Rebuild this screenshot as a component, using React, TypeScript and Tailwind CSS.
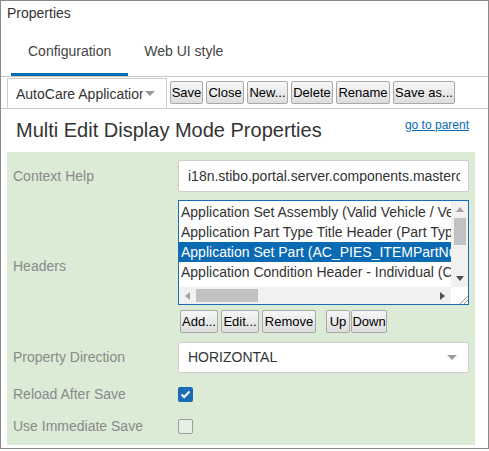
import React from "react";

const Btn = ({ children, w }: { children: React.ReactNode; w: string }) => (
  <div
    className={`${w} h-[23px] flex items-center justify-center border border-[#a9a9a9] rounded-[2px] bg-gradient-to-b from-[#f7f7f7] to-[#dddddd] text-[13px] text-black leading-none whitespace-nowrap`}
  >
    {children}
  </div>
);

const Caret = ({ cls }: { cls: string }) => (
  <svg width="10" height="6" viewBox="0 0 10 6" className={cls}>
    <polygon points="0,0 10,0 5,5" fill="#9a9a9a" />
  </svg>
);

export default function App() {
  const rows = [
    "Application Set Assembly (Valid Vehicle / Vehicle)",
    "Application Part Type Title Header (Part Type)",
    "Application Set Part (AC_PIES_ITEMPartNumber)",
    "Application Condition Header - Individual (Condition)",
  ];
  return (
    <div
      className="w-[489px] h-[451px] bg-white"
      style={{ fontFamily: '"Liberation Sans", Arial, sans-serif' }}
    >
      <div className="w-[489px] h-[449px] border border-[#8a8a8a] flex flex-col">
        {/* title */}
        <div className="h-[25px] pl-[6px] pt-[4px] text-[14px] leading-[16px] text-[#333]">
          Properties
        </div>
        {/* tabs */}
        <div className="h-[51px] flex items-stretch border-b border-[#c9c9c9] pl-[10px]">
          <div className="px-[17px] pt-[4px] flex items-center border-b-[3px] border-[#0b6cb4] text-[14px] text-[#444]">
            Configuration
          </div>
          <div className="px-[16px] pt-[4px] flex items-center border-b-[3px] border-transparent text-[14px] text-[#444]">
            Web UI style
          </div>
        </div>
        {/* toolbar */}
        <div className="h-[32px] flex items-start border-b border-[#c9c9c9] pl-[6px] pt-[1px]">
          <div className="w-[160px] h-[31px] border border-[#cfcfcf] border-b-0 flex items-center pl-[8px] mr-[3px]">
            <div className="w-[127px] overflow-hidden whitespace-nowrap text-[14px] text-[#333]">
              AutoCare Applications
            </div>
            <Caret cls="ml-[2px]" />
          </div>
          <div className="flex gap-[3px] pt-[3px]">
            <Btn w="w-[33px]">Save</Btn>
            <Btn w="w-[38px]">Close</Btn>
            <Btn w="w-[41px]">New...</Btn>
            <Btn w="w-[42px]">Delete</Btn>
            <Btn w="w-[54px]">Rename</Btn>
            <Btn w="w-[62px]">Save as...</Btn>
          </div>
        </div>
        {/* heading */}
        <div className="h-[43px] flex items-start pl-[15px] pr-[19px]">
          <div className="pt-[9px] text-[20px] leading-[24px] text-[#333] flex-1">
            Multi Edit Display Mode Properties
          </div>
          <div className="pt-[8px] text-[12px] leading-[16px] text-[#0b6cb4] underline">
            go to parent
          </div>
        </div>
        {/* green panel */}
        <div className="ml-[6px] w-[468px] h-[293px] bg-[#dbebd6] flex flex-col pt-[8px]">
          {/* context help */}
          <div className="flex items-center h-[32px]">
            <div className="w-[171px] pl-[6px] text-[14px] text-[#8a8a8a]">Context Help</div>
            <div className="w-[291px] h-[32px] bg-white border border-[#cfcfcf] rounded-[2px] flex items-center pl-[9px] pr-[8px]">
              <div className="overflow-hidden whitespace-nowrap text-[14px] text-[#333]">
                i18n.stibo.portal.server.components.mastercontrol.help
              </div>
            </div>
          </div>
          {/* headers */}
          <div className="flex items-center mt-[8px]">
            <div className="w-[171px] pl-[6px] text-[14px] text-[#8a8a8a]">Headers</div>
            <div className="w-[291px] flex flex-col">
              <div className="w-[291px] h-[105px] bg-white border border-[#1a6db5] flex flex-col">
                <div className="flex h-[86px]">
                  <div className="w-[272px] pt-[1px] overflow-hidden">
                    {rows.map((r, i) => (
                      <div
                        key={i}
                        className={`h-[20px] pl-[2px] flex items-center whitespace-nowrap text-[14px] ${
                          i === 2 ? "bg-[#0a6ab3] text-white" : "text-[#333]"
                        }`}
                      >
                        {r}
                      </div>
                    ))}
                  </div>
                  {/* vertical scrollbar */}
                  <div className="w-[17px] h-[86px] bg-[#f1f1f1] flex flex-col items-center">
                    <div className="h-[17px] flex items-center justify-center">
                      <svg width="8" height="5" viewBox="0 0 8 5">
                        <polygon points="0,5 8,5 4,0" fill="#a3a3a3" />
                      </svg>
                    </div>
                    <div className="w-[12px] h-[27px] bg-[#c1c1c1]" />
                    <div className="flex-1" />
                    <div className="h-[17px] flex items-center justify-center">
                      <svg width="8" height="5" viewBox="0 0 8 5">
                        <polygon points="0,0 8,0 4,5" fill="#505050" />
                      </svg>
                    </div>
                  </div>
                </div>
                <div className="flex h-[17px]">
                  <div className="w-[272px] h-[17px] bg-[#f1f1f1] flex items-center">
                    <div className="w-[17px] flex items-center justify-center">
                      <svg width="5" height="8" viewBox="0 0 5 8">
                        <polygon points="5,0 5,8 0,4" fill="#a3a3a3" />
                      </svg>
                    </div>
                    <div className="w-[62px] h-[13px] bg-[#c1c1c1]" />
                    <div className="flex-1" />
                    <div className="w-[17px] flex items-center justify-center">
                      <svg width="5" height="8" viewBox="0 0 5 8">
                        <polygon points="0,0 0,8 5,4" fill="#505050" />
                      </svg>
                    </div>
                  </div>
                  <div className="w-[17px] h-[17px] bg-white flex items-end justify-end">
                    <svg width="10" height="10" viewBox="0 0 10 10">
                      <line x1="2" y1="10" x2="10" y2="2" stroke="#9a9a9a" strokeWidth="1" />
                      <line x1="6" y1="10" x2="10" y2="6" stroke="#9a9a9a" strokeWidth="1" />
                    </svg>
                  </div>
                </div>
              </div>
              <div className="flex mt-[5px] pl-[2px] gap-[3px]">
                <Btn w="w-[38px]">Add...</Btn>
                <Btn w="w-[38px]">Edit...</Btn>
                <Btn w="w-[54px]">Remove</Btn>
                <div className="w-[4px]" />
                <Btn w="w-[24px]">Up</Btn>
                <div className="-ml-[2px]">
                  <Btn w="w-[36px]">Down</Btn>
                </div>
              </div>
            </div>
          </div>
          {/* property direction */}
          <div className="flex items-center mt-[9px] h-[31px]">
            <div className="w-[171px] pl-[6px] text-[14px] text-[#8a8a8a]">Property Direction</div>
            <div className="w-[291px] h-[31px] bg-white border border-[#cfcfcf] rounded-[2px] flex items-center pl-[9px] pr-[11px]">
              <div className="flex-1 text-[14px] text-[#333]">HORIZONTAL</div>
              <Caret cls="" />
            </div>
          </div>
          {/* reload */}
          <div className="flex items-center mt-[5px] h-[32px]">
            <div className="w-[171px] pl-[6px] text-[14px] text-[#8a8a8a]">Reload After Save</div>
            <div className="w-[15px] h-[15px] rounded-[2px] bg-[#1b6cb5] flex items-center justify-center">
              <svg width="11" height="9" viewBox="0 0 11 9">
                <polyline points="1.5,4.5 4.2,7 9.5,1.5" fill="none" stroke="white" strokeWidth="2" />
              </svg>
            </div>
          </div>
          {/* immediate */}
          <div className="flex items-center h-[32px]">
            <div className="w-[171px] pl-[6px] text-[14px] text-[#8a8a8a]">Use Immediate Save</div>
            <div className="w-[15px] h-[15px] rounded-[2px] border border-[#9c9c9c] bg-[#e6efe3]" />
          </div>
        </div>
      </div>
    </div>
  );
}
